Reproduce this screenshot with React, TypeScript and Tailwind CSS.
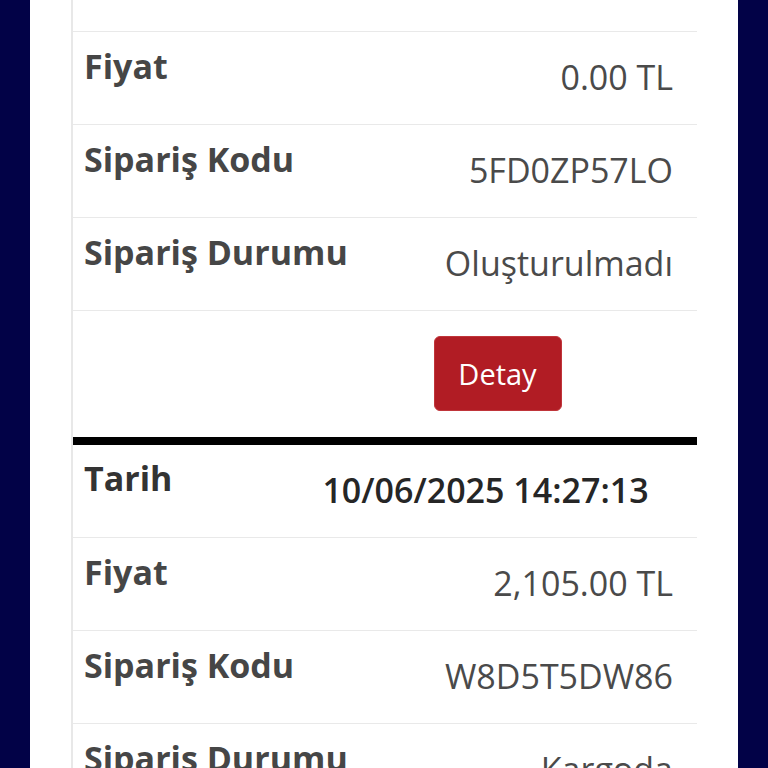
import * as React from 'react';

type Row = { label: string; value: string; strong?: boolean };

const orders: { rows: Row[]; button?: boolean }[] = [
  {
    rows: [
      { label: 'Tarih', value: '09/06/2025 11:02:41', strong: true },
      { label: 'Fiyat', value: '0.00 TL' },
      { label: 'Sipariş Kodu', value: '5FD0ZP57LO' },
      { label: 'Sipariş Durumu', value: 'Oluşturulmadı' },
    ],
    button: true,
  },
  {
    rows: [
      { label: 'Tarih', value: '10/06/2025 14:27:13', strong: true },
      { label: 'Fiyat', value: '2,105.00 TL' },
      { label: 'Sipariş Kodu', value: 'W8D5T5DW86' },
      { label: 'Sipariş Durumu', value: 'Kargoda' },
    ],
  },
];

function InfoRow({ row }: { row: Row }) {
  return (
    <div className="grid grid-cols-[225px_1fr] h-[93px] border-b border-[#e9e9e9]">
      <div
        className={`pl-[11px] text-[34px] font-bold leading-none whitespace-nowrap ${
          row.label === 'Tarih' ? 'pt-[16px] text-[#333333]' : 'pt-[17px] text-[#464646]'
        }`}
      >
        {row.label}
      </div>
      {row.strong ? (
        <div className="pr-[24px] pt-[28px] text-center text-[34px] font-semibold leading-none text-[#262626] whitespace-nowrap">
          {row.value}
        </div>
      ) : (
        <div className="pr-[24px] pt-[28px] text-right text-[34px] leading-none text-[#4a4a4a] whitespace-nowrap">
          {row.value}
        </div>
      )}
    </div>
  );
}

export default function App() {
  return (
    <div
      className="h-[768px] overflow-hidden bg-[#020247] px-[30px]"
      style={{ fontFamily: '"Open Sans", "Noto Sans", sans-serif' }}
    >
      <div className="bg-white px-[41px] pb-[100px]">
        <div className="-mt-[61px] border-l-2 border-[#e8e8e8]">
          {orders.map((order, i) => (
            <div key={i} className={i > 0 ? 'border-t-[8px] border-black' : ''}>
              {order.rows.map((row) => (
                <InfoRow key={row.label} row={row} />
              ))}
              {order.button && (
                <div className="grid grid-cols-[225px_1fr] h-[126px]">
                  <div />
                  <div className="flex justify-center pt-[25px]">
                    <button className="w-[128px] h-[75px] rounded-md bg-[#b11c24] border border-[#c0353a] text-white text-[29px] leading-none">
                      Detay
                    </button>
                  </div>
                </div>
              )}
            </div>
          ))}
        </div>
      </div>
    </div>
  );
}
